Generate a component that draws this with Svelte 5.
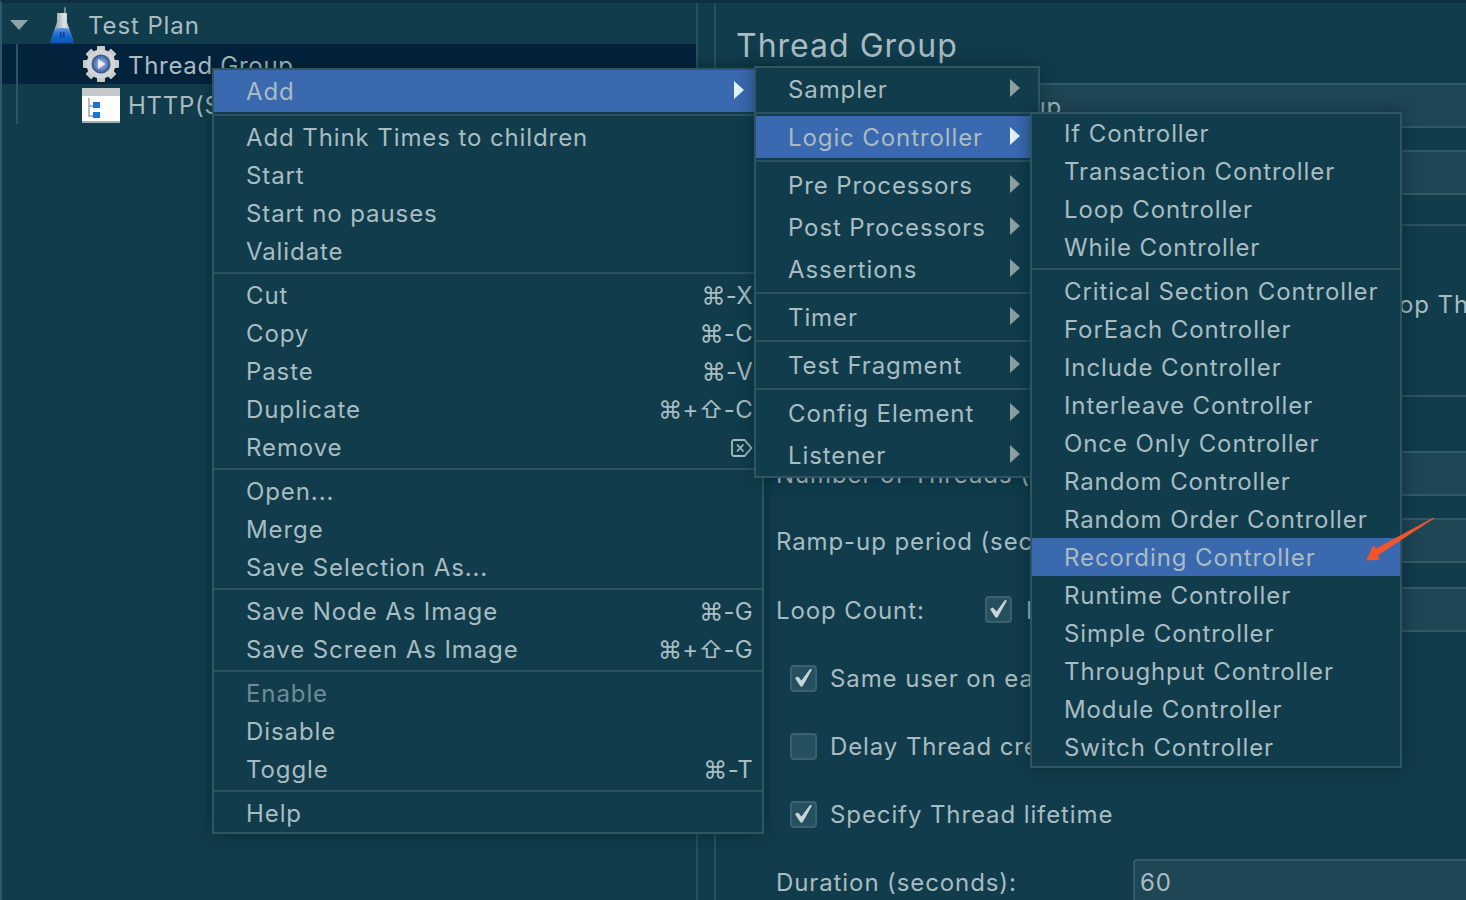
<script>
	const mainMenu = [
		{ label: 'Add', sel: true, arrow: true, tall: true },
		'-',
		{ label: 'Add Think Times to children' },
		{ label: 'Start' },
		{ label: 'Start no pauses' },
		{ label: 'Validate' },
		'-',
		{ label: 'Cut', key: '⌘-X' },
		{ label: 'Copy', key: '⌘-C' },
		{ label: 'Paste', key: '⌘-V' },
		{ label: 'Duplicate', key: '⌘+⇧-C' },
		{ label: 'Remove', del: true },
		'-',
		{ label: 'Open...' },
		{ label: 'Merge' },
		{ label: 'Save Selection As...' },
		'-',
		{ label: 'Save Node As Image', key: '⌘-G' },
		{ label: 'Save Screen As Image', key: '⌘+⇧-G' },
		'-',
		{ label: 'Enable', off: true },
		{ label: 'Disable' },
		{ label: 'Toggle', key: '⌘-T' },
		'-',
		{ label: 'Help' }
	];

	const addMenu = [
		{ label: 'Sampler', arrow: true, tall: true },
		'-',
		{ label: 'Logic Controller', arrow: true, tall: true, sel: true },
		'-',
		{ label: 'Pre Processors', arrow: true, tall: true },
		{ label: 'Post Processors', arrow: true, tall: true },
		{ label: 'Assertions', arrow: true, tall: true },
		'-',
		{ label: 'Timer', arrow: true, tall: true },
		'-',
		{ label: 'Test Fragment', arrow: true, tall: true },
		'-',
		{ label: 'Config Element', arrow: true, tall: true },
		{ label: 'Listener', arrow: true, tall: true }
	];

	const logicMenu = [
		{ label: 'If Controller' },
		{ label: 'Transaction Controller' },
		{ label: 'Loop Controller' },
		{ label: 'While Controller' },
		'-',
		{ label: 'Critical Section Controller' },
		{ label: 'ForEach Controller' },
		{ label: 'Include Controller' },
		{ label: 'Interleave Controller' },
		{ label: 'Once Only Controller' },
		{ label: 'Random Controller' },
		{ label: 'Random Order Controller' },
		{ label: 'Recording Controller', sel: true },
		{ label: 'Runtime Controller' },
		{ label: 'Simple Controller' },
		{ label: 'Throughput Controller' },
		{ label: 'Module Controller' },
		{ label: 'Switch Controller' }
	];

	const teeth = [0, 45, 90, 135, 180, 225, 270, 315];
</script>

{#snippet menuItems(items)}
	{#each items as item}
		{#if item === '-'}
			<div class="sep"></div>
		{:else}
			<div class="item" class:tall={item.tall} class:sel={item.sel} class:off={item.off}>
				<span>{item.label}</span>
				{#if item.key}
					<span class="key">{item.key}</span>
				{/if}
				{#if item.del}
					<svg class="del" width="22" height="18" viewBox="0 0 22 18">
						<path d="M3 1h10.500l7 8-7 8H3a2 2 0 0 1-2-2V3a2 2 0 0 1 2-2z" fill="none" stroke="currentColor" stroke-width="1.800" />
						<path d="M6 5.500l6.500 7M12.500 5.500l-6.500 7" fill="none" stroke="currentColor" stroke-width="1.800" />
					</svg>
				{/if}
				{#if item.arrow}
					<i class="arrow"></i>
				{/if}
			</div>
		{/if}
	{/each}
{/snippet}

{#snippet check(on)}
	<span class="box">
		{#if on}
			<svg width="23" height="23" viewBox="0 0 23 23">
				<path d="M3 11l3-1.500 3.500 4L18 2l2 .5-9.500 17h-2z" fill="#c9d6d9" />
			</svg>
		{/if}
	</span>
{/snippet}

<div class="app">
	<div class="tree">
		<div class="node">
			<i class="caret"></i>
			<svg class="flask" width="24" height="38" viewBox="0 0 24 38">
				<defs>
					<linearGradient id="glass" x1="0" x2="1" y1="0" y2="0">
						<stop offset="0" stop-color="#6f848b" />
						<stop offset="0.6" stop-color="#dfe6e8" />
						<stop offset="1" stop-color="#8b9da3" />
					</linearGradient>
					<linearGradient id="liquid" x1="0" x2="0" y1="0" y2="1">
						<stop offset="0" stop-color="#5f93d8" />
						<stop offset="0.5" stop-color="#1268d8" />
						<stop offset="1" stop-color="#0d55b8" />
					</linearGradient>
				</defs>
				<path d="M14 1l2 .500v6h-2z" fill="#75868c" />
				<path d="M7 7h10v9l6 18q.5 3-2 3H3q-2.500 0-2-3l6-18z" fill="url(#glass)" />
				<path d="M5 23q7-2 14 0l4 11q.5 3-2 3H3q-2.500 0-2-3z" fill="url(#liquid)" />
				<path d="M10 26h1.500v6H10zM13 26h1.500v6H13z" fill="#0a3f96" />
			</svg>
			<span>Test Plan</span>
		</div>
		<div class="node child selected">
			<svg width="38" height="38" viewBox="0 0 38 38">
				<defs>
					<radialGradient id="disc">
						<stop offset="0" stop-color="#b4c6e4" />
						<stop offset="0.65" stop-color="#5f80b8" />
						<stop offset="1" stop-color="#2a4a86" />
					</radialGradient>
				</defs>
				{#each teeth as a}
					<rect x="15" y="1" width="8" height="8" rx="1" fill="#c6cacd" transform="rotate({a} 19 19)" />
				{/each}
				<circle cx="19" cy="19" r="14.500" fill="#d2d5d8" />
				<circle cx="19" cy="19" r="9.500" fill="url(#disc)" />
				<path d="M16 14l7.500 5-7.500 5z" fill="#e4ecf6" />
			</svg>
			<span>Thread Group</span>
		</div>
		<div class="node child">
			<svg class="recorder" width="38" height="35" viewBox="0 0 38 35">
				<rect width="38" height="34" fill="#fff" />
				<rect width="38" height="8" fill="#c4c8cb" />
				<rect y="33" width="38" height="2" fill="#a9aeb1" />
				<path d="M7 10v18h4M7 18h4" fill="none" stroke="#9aa0a4" stroke-width="1.400" />
				<rect x="11" y="14" width="7" height="6" fill="#1a72dc" />
				<rect x="11" y="24" width="7" height="6" fill="#1a72dc" />
			</svg>
			<span>HTTP(S) Test Script Recorder</span>
		</div>
	</div>

	<div class="detail">
		<h1>Thread Group</h1>
		<div class="row head">
			<span class="label">Name:</span>
			<div class="field">Thread Group</div>
		</div>
		<div class="row head">
			<span class="label">Comments:</span>
			<div class="field"></div>
		</div>

		<section class="action">
			<span class="radio first">Continue</span>
			<span class="radio">Start Next Thread Loop</span>
			<span class="radio">Stop Thread</span>
			<span class="radio">Stop Test</span>
		</section>

		<section class="props">
			<div class="row">
				<span class="label">Number of Threads (users):</span>
				<div class="field"></div>
			</div>
			<div class="row ramp">
				<span class="label">Ramp-up period (seconds):</span>
				<div class="field"></div>
			</div>
			<div class="row loop">
				<span class="label short">Loop Count:</span>
				{@render check(true)}
				<span class="infinite">Infinite</span>
				<div class="field"></div>
			</div>
			<div class="opt">{@render check(true)}<span>Same user on each iteration</span></div>
			<div class="opt">{@render check(false)}<span>Delay Thread creation until needed</span></div>
			<div class="opt">{@render check(true)}<span>Specify Thread lifetime</span></div>
			<div class="row">
				<span class="label">Duration (seconds):</span>
				<div class="field">60</div>
			</div>
		</section>
	</div>

	<div class="menu main">{@render menuItems(mainMenu)}</div>
	<div class="menu add">{@render menuItems(addMenu)}</div>
	<div class="menu logic">{@render menuItems(logicMenu)}</div>

	<svg class="pointer" width="72" height="44" viewBox="0 0 72 44">
		<path d="M69.500 0.500L12 31.500l-2.500-3.500L2 43.500l14-.7-2.300-4.300L70 1.500z" fill="#f0562a" />
	</svg>
</div>

<style>
	:global(body) {
		margin: 0;
		background: #103c4c;
	}

	.app {
		position: relative;
		display: flex;
		width: 1466px;
		height: 900px;
		overflow: hidden;
		box-sizing: border-box;
		border-top: 3px solid #0d3040;
		border-left: 2px solid #2c5870;
		background: #103c4c;
		color: #a9bcc1;
		font-family: Inter, 'DejaVu Sans', sans-serif;
		font-size: 24px;
		letter-spacing: 0.9px;
	}

	.tree {
		position: relative;
		box-sizing: border-box;
		width: 696px;
		flex: none;
		padding-top: 3px;
		border-right: 2px solid #26505f;
	}

	.tree::before {
		content: '';
		position: absolute;
		left: 14px;
		top: 41px;
		width: 2px;
		height: 80px;
		background: #2a5563;
	}

	.node {
		display: flex;
		align-items: center;
		height: 40px;
		padding-left: 80px;
		gap: 8px;
		white-space: nowrap;
	}

	.node:first-child {
		height: 38px;
		padding-left: 8px;
	}

	.child span {
		padding-top: 3px;
		letter-spacing: 0.7px;
	}

	.recorder {
		margin-top: 3px;
	}

	.selected {
		background: #03233c;
	}

	.caret {
		width: 0;
		height: 0;
		margin-right: 14px;
		border-left: 9px solid transparent;
		border-right: 9px solid transparent;
		border-top: 10px solid #8fa3a8;
	}

	.flask {
		margin-right: 6px;
	}

	.detail {
		flex: 1;
		min-width: 0;
		box-sizing: border-box;
		margin-left: 16px;
		padding-top: 21px;
		border-left: 2px solid #26505f;
	}

	h1 {
		height: 42px;
		margin: 0 0 17px 20px;
		font-size: 32px;
		font-weight: 400;
		line-height: 44px;
		letter-spacing: 1px;
	}

	.row {
		display: flex;
		align-items: center;
		height: 45px;
		margin-bottom: 22px;
		padding-left: 60px;
		white-space: nowrap;
	}

	.row.head {
		padding-left: 20px;
	}

	.label {
		flex: none;
		width: 357px;
		padding-top: 2px;
	}

	.head .label {
		width: 151px;
	}

	.label.short {
		width: 209px;
	}

	.ramp {
		margin-bottom: 24px;
	}

	.field {
		flex: 1;
		box-sizing: border-box;
		height: 100%;
		padding-left: 5px;
		line-height: 44px;
		background: #1e4654;
		border: 2px solid #315a67;
		border-right: none;
		border-top-left-radius: 4px;
		border-bottom-left-radius: 4px;
	}

	.action {
		display: flex;
		align-items: center;
		box-sizing: border-box;
		height: 171px;
		margin-top: 29px;
		padding: 0 0 12px 40px;
		border-top: 2px solid #2b5462;
		white-space: nowrap;
	}

	.radio {
		flex: none;
		margin-right: 40px;
	}

	.radio.first {
		margin-left: 144px;
	}

	.props {
		box-sizing: border-box;
		padding-top: 54px;
		border-top: 2px solid #2b5462;
	}

	.loop {
		margin-bottom: 32px;
	}

	.infinite {
		flex: none;
		width: 100px;
		margin-left: 14px;
		padding-top: 2px;
	}

	.opt {
		display: flex;
		align-items: center;
		gap: 13px;
		height: 28px;
		margin-bottom: 40px;
		padding-left: 74px;
		white-space: nowrap;
	}

	.opt:nth-last-child(2) {
		margin-bottom: 31px;
	}

	.box {
		display: block;
		flex: none;
		box-sizing: border-box;
		width: 27px;
		height: 27px;
		background: #24505f;
		border: 2px solid #3a6170;
		border-radius: 4px;
	}

	.box svg {
		display: block;
	}

	.menu {
		position: absolute;
		box-sizing: border-box;
		background: #103c4c;
		border: 2px solid #2d5563;
		box-shadow: 0 0 16px rgba(3, 25, 35, 0.45);
	}

	.main {
		left: 210px;
		top: 65px;
		width: 552px;
		height: 766px;
	}

	.add {
		left: 752px;
		top: 63px;
		width: 286px;
		height: 412px;
	}

	.logic {
		left: 1028px;
		top: 109px;
		width: 372px;
		height: 656px;
	}

	.item {
		display: flex;
		align-items: center;
		justify-content: space-between;
		box-sizing: border-box;
		height: 38px;
		padding: 1px 9px 0 32px;
		white-space: nowrap;
	}

	.tall {
		height: 42px;
		padding-right: 18px;
	}

	.sel {
		background: #3a69b0;
	}

	.off {
		color: #6f8c94;
	}

	.sep {
		height: 2px;
		margin: 2px 0;
		background: #2a5361;
	}

	.key {
		letter-spacing: 0.3px;
	}

	.del {
		display: block;
	}

	.arrow {
		width: 0;
		height: 0;
		margin-top: -3px;
		border-top: 9px solid transparent;
		border-bottom: 9px solid transparent;
		border-left: 10px solid #8d9fa1;
	}

	.sel .arrow {
		border-left-color: #e0f5f7;
	}

	.pointer {
		position: absolute;
		left: 1362px;
		top: 514px;
	}
</style>
